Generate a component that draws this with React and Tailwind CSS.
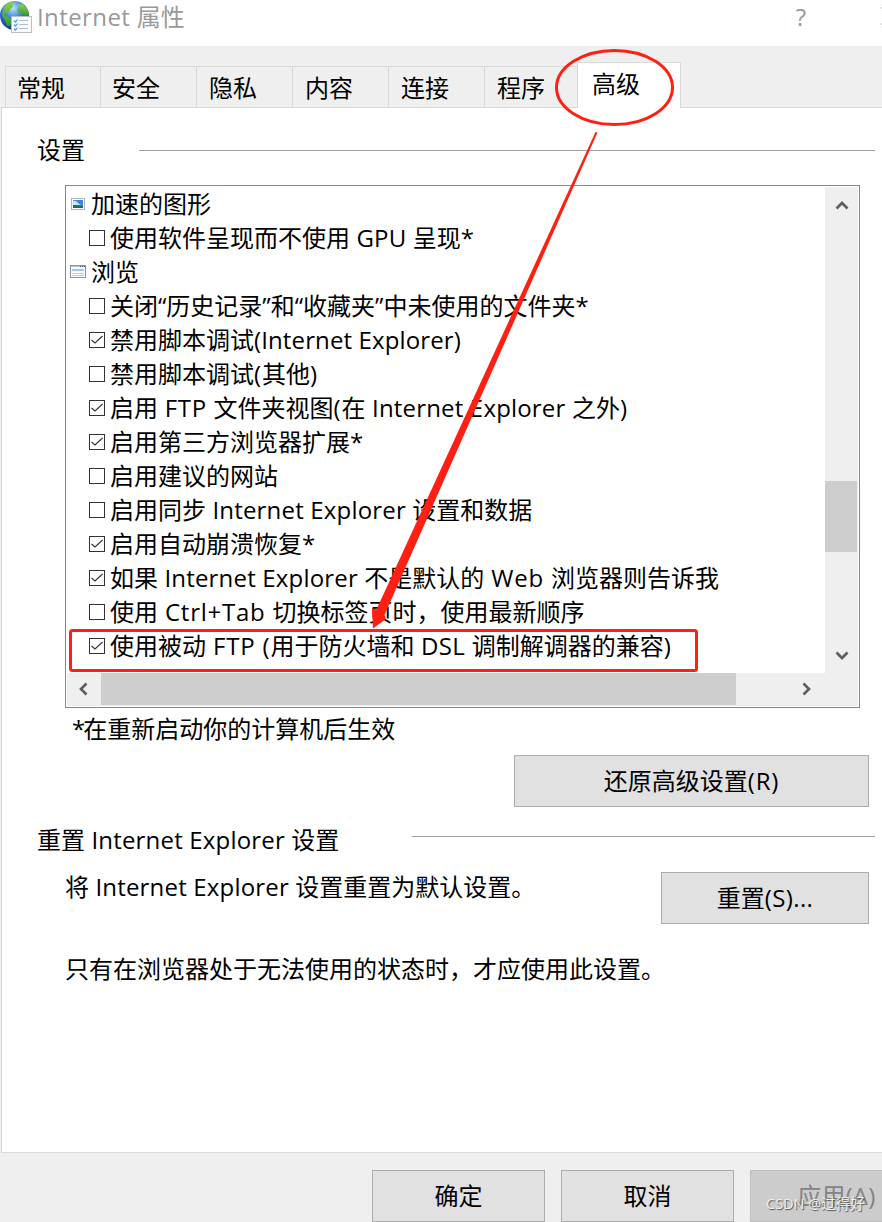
import React from 'react';
import { clsx } from 'clsx';

const tabs = [
  { label: '常规', className: 'w-[95px] pl-[11px]' },
  { label: '安全', className: 'w-24 pl-[11px]' },
  { label: '隐私', className: 'w-24 pl-3' },
  { label: '内容', className: 'w-24 pl-3' },
  { label: '连接', className: 'w-24 pl-3' },
  { label: '程序', className: 'w-[93px] pl-3' },
];

const settings = [
  { group: true, icon: 'picture', label: '加速的图形' },
  { label: '使用软件呈现而不使用 GPU 呈现*' },
  { group: true, icon: 'window', label: '浏览' },
  { label: '关闭“历史记录”和“收藏夹”中未使用的文件夹*' },
  { checked: true, label: '禁用脚本调试(Internet Explorer)' },
  { label: '禁用脚本调试(其他)' },
  { checked: true, label: '启用 FTP 文件夹视图(在 Internet Explorer 之外)' },
  { checked: true, label: '启用第三方浏览器扩展*' },
  { label: '启用建议的网站' },
  { label: '启用同步 Internet Explorer 设置和数据' },
  { checked: true, label: '启用自动崩溃恢复*' },
  { checked: true, label: '如果 Internet Explorer 不是默认的 Web 浏览器则告诉我' },
  { label: '使用 Ctrl+Tab 切换标签页时，使用最新顺序' },
  { checked: true, label: '使用被动 FTP (用于防火墙和 DSL 调制解调器的兼容)' },
];

// Latin runs get a little tracking, Chinese runs stay on the 24px grid
const tracking = {
  ' FTP ': 'tracking-[0.6px]',
  ' FTP (': 'tracking-[0.8px]',
  ' Ctrl+Tab ': 'tracking-[0.75px]',
  ' Web ': 'tracking-[0.8px]',
  ' DSL ': 'tracking-[0.35px]',
  '(': 'tracking-[1px]',
  '*': 'tracking-[-2px]',
  '(Internet Explorer)': 'tracking-[0.12px]',
  'Internet ': 'tracking-[0.4px]',
  '(R)': 'tracking-[0.9px]',
  '(S)...': 'tracking-[0.4px]',
};

const Text = ({ children }) =>
  children.split(/([\x20-\x7e]+)/).map((part, i) =>
    i % 2 ? (
      <span key={i} className={tracking[part] || 'tracking-[0.18px]'}>{part}</span>
    ) : (
      part
    )
  );

const GlobeIcon = () => (
  <svg width="33" height="34" viewBox="0 0 33 34" className="shrink-0">
    <defs>
      <radialGradient id="sea" cx="0.45" cy="0.25" r="0.75">
        <stop offset="0" stopColor="#b9e4fa" />
        <stop offset="0.45" stopColor="#3f86d8" />
        <stop offset="1" stopColor="#152f86" />
      </radialGradient>
      <linearGradient id="land" x1="0" y1="0" x2="0" y2="1">
        <stop offset="0" stopColor="#8fd050" />
        <stop offset="1" stopColor="#2f9a2c" />
      </linearGradient>
    </defs>
    <circle cx="14.500" cy="15.500" r="14.500" fill="url(#sea)" />
    <path d="M4 7C6 4 9 2 12 1.500L14 3L12 5L13 7L10 9L9 12L5 13L4 15L8 17L12 20L10 26L7 26L5 20L2 15Z" fill="url(#land)" />
    <path d="M18 4L23 4.500C27 8 29 11 29 15L26 16L22 13L19 13L17 9L20 7Z" fill="url(#land)" />
    <rect x="11.500" y="16.500" width="20" height="16" fill="#f8f9fb" stroke="#b9bdc8" />
    <path d="M19 20.500H28M19 24.500H28M19 28.500H28" stroke="#b4bccb" strokeWidth="1.200" />
    <path d="M14 20.500L15.500 22L17.500 19.500M14 24.500L15.500 26L17.500 23.500M14 28.500L15.500 30L17.500 27.500" fill="none" stroke="#4c9bcb" strokeWidth="1.200" />
  </svg>
);

const PictureIcon = () => (
  <svg width="16" height="16" viewBox="0 0 16 16" className="shrink-0">
    <rect x="1.500" y="2.500" width="13" height="11" fill="#fff" stroke="#a8b4c0" />
    <rect x="3" y="4" width="10" height="8" fill="#3f86cc" />
    <path d="M3 5Q6 4 8 7L11 9H3Z" fill="#c4e8fa" />
    <path d="M3 9Q8 9 13 10V12H3Z" fill="#1d6f58" />
  </svg>
);

const WindowIcon = () => (
  <svg width="16" height="16" viewBox="0 0 16 16" className="shrink-0">
    <rect x="0.500" y="1.500" width="15" height="12" fill="#f6f8fa" stroke="#8995a3" />
    <path d="M1 2.500H15" stroke="#bcc6d1" />
    <path d="M10 2.500H11M12 2.500H13M14 2.500H15" stroke="#44546a" />
    <path d="M2 6H14" stroke="#9cc8ee" strokeWidth="2" />
    <path d="M2 9.500H14M2 11.500H14" stroke="#c9cdd2" />
  </svg>
);

const CheckBox = ({ checked }) => (
  <svg width="16" height="16" viewBox="0 0 16 16" className="shrink-0">
    <rect x="0.500" y="0.500" width="15" height="15" fill="#fff" stroke="#333" />
    {checked && <path d="M2.500 8L6 11L13.500 4" fill="none" stroke="#333" strokeWidth="1.100" />}
  </svg>
);

const Chevron = ({ d, className }) => (
  <svg width="16" height="16" viewBox="0 0 16 16" className={className}>
    <path d={d} fill="none" stroke="#5f5f5f" strokeWidth="2.700" />
  </svg>
);

const Button = ({ className, disabled, children }) => (
  <button
    disabled={disabled}
    className={clsx(
      'h-[52px] shrink-0 border text-center leading-[50px]',
      disabled ? 'border-[#bfbfbf] bg-[#cccccc] text-[#838383]' : 'border-[#adadad] bg-[#e1e1e1]',
      className
    )}
  >
    <Text>{children}</Text>
  </button>
);

const SettingsList = () => (
  <div className="ml-[63px] h-[523px] w-[795px] border border-[#828790] p-px">
    <div className="flex h-[486px]">
      <div className="flex-1 overflow-hidden">
        {settings.map((item) => (
          <div
            key={item.label}
            className={clsx('flex h-[34px] items-center gap-[5px] whitespace-nowrap', item.group ? 'pl-[3px]' : 'pl-[22px]')}
          >
            {item.icon === 'picture' && <PictureIcon />}
            {item.icon === 'window' && <WindowIcon />}
            {!item.group && <CheckBox checked={item.checked} />}
            <span className="leading-[34px]"><Text>{item.label}</Text></span>
          </div>
        ))}
      </div>
      <div className="flex w-[33px] flex-col bg-[#efefef]">
        <Chevron d="M2.500 10.500L8 5L13.500 10.500" className="mt-[11px] ml-[9px]" />
        <div className="mt-[267px] h-[71px] w-8 bg-[#cdcdcd]" />
        <Chevron d="M2.500 5.500L8 11L13.500 5.500" className="mt-[95px] ml-[9px]" />
      </div>
    </div>
    <div className="flex h-[33px] items-start bg-[#efefef]">
      <Chevron d="M10.500 2.500L5 8L10.500 13.500" className="mx-[9px] mt-2" />
      <div className="h-8 w-[635px] bg-[#cdcdcd]" />
      <Chevron d="M5.500 2.500L11 8L5.500 13.500" className="mt-2 ml-[62px]" />
    </div>
  </div>
);

const Annotations = () => (
  <svg width="882" height="1222" viewBox="0 0 882 1222" className="pointer-events-none absolute top-0 left-0 z-20">
    <g fill="none" stroke="#ff2013" strokeWidth="3">
      <ellipse cx="614.500" cy="87.500" rx="58" ry="37" />
      <rect x="70.500" y="630.500" width="626" height="40" rx="2" />
    </g>
    <path d="M595.500 132L597.500 132.500L384.500 615L386 619L373 628.500L372 608L376.500 609.500Z" fill="#ff2013" />
  </svg>
);

const App = () => {
  return (
    <div
      lang="zh-CN"
      className="relative flex h-[1222px] w-[882px] flex-col overflow-hidden bg-[#efefef] font-['Open_Sans','Noto_Sans_CJK_SC',sans-serif] text-[24px] text-black"
    >
      <header className="flex h-[46px] shrink-0 items-start bg-white text-[#999]">
        <GlobeIcon />
        <h1 className="ml-1 flex-1 leading-[34px]"><Text>Internet 属性</Text></h1>
        <span className="leading-[34px]">?</span>
        {/* close button, cut off by the window edge */}
        <svg width="18" height="18" viewBox="0 0 18 18" className="mt-[7px] -mr-[17px] ml-[75px]">
          <path d="M0.500 0.500L17.500 17.500M17.500 0.500L0.500 17.500" stroke="#999" strokeWidth="1.200" />
        </svg>
      </header>

      <nav className="mt-4 flex h-[45px] shrink-0 items-end pl-[5px]">
        {tabs.map((tab) => (
          <div
            key={tab.label}
            className={clsx('h-[41px] shrink-0 border-t border-l border-[#d9d9d9] leading-[41px]', tab.className)}
          >
            {tab.label}
          </div>
        ))}
        <div className="z-10 -mb-px h-[46px] w-[104px] border border-b-0 border-[#d9d9d9] bg-white pl-[14px] leading-[42px]">
          高级
        </div>
      </nav>

      <main className="ml-px h-[1046px] shrink-0 border-y border-l border-[#d9d9d9] bg-white">
        <div className="flex h-[77px] items-start pt-[25px]">
          <h2 className="w-[137px] pl-[35px] leading-[34px]">设置</h2>
          <div className="mt-[17px] h-px w-[736px] bg-[#a0a0a0]" />
        </div>

        <SettingsList />

        <p className="mt-1 ml-[70px] leading-[34px]"><Text>*在重新启动你的计算机后生效</Text></p>
        <Button className="mt-[9px] ml-[512px] block w-[355px]">还原高级设置(R)</Button>

        <div className="mt-4 flex items-start">
          <h2 className="w-[410px] pl-[35px] leading-[34px]"><Text>重置 Internet Explorer 设置</Text></h2>
          <div className="mt-[13px] h-px w-[463px] bg-[#a0a0a0]" />
        </div>
        <div className="mt-[13px] flex items-start pl-[63px]">
          <p className="w-[596px] leading-[34px]"><Text>将 Internet Explorer 设置重置为默认设置。</Text></p>
          <Button className="mt-0.5 w-[208px]">重置(S)...</Button>
        </div>
        <p className="mt-7 ml-[63px] leading-[34px]">只有在浏览器处于无法使用的状态时，才应使用此设置。</p>
      </main>

      <footer className="flex gap-4 pt-[17px] pl-[372px]">
        <Button className="w-[173px]">确定</Button>
        <Button className="w-[173px]">取消</Button>
        <Button disabled className="w-[173px]">应用(A)</Button>
      </footer>

      <Annotations />
      <span className="absolute top-[1193px] left-[766px] text-[14.5px] leading-[22px] whitespace-nowrap text-[#eeeeee] [text-shadow:1px_1px_1px_#555]">
        CSDN @过得好
      </span>
    </div>
  );
};

export default App;
